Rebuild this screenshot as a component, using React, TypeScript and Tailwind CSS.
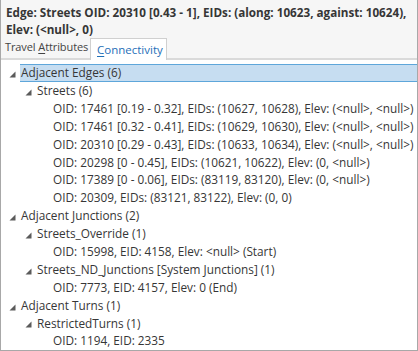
import React from "react";

type Row = { level: number; text: string; toggle: boolean; selected?: boolean };

const rows: Row[] = [
  { level: 0, text: "Adjacent Edges (6)", toggle: true, selected: true },
  { level: 1, text: "Streets (6)", toggle: true },
  { level: 2, text: "OID: 17461 [0.19 - 0.32], EIDs: (10627, 10628), Elev: (<null>, <null>)", toggle: false },
  { level: 2, text: "OID: 17461 [0.32 - 0.41], EIDs: (10629, 10630), Elev: (<null>, <null>)", toggle: false },
  { level: 2, text: "OID: 20310 [0.29 - 0.43], EIDs: (10633, 10634), Elev: (<null>, <null>)", toggle: false },
  { level: 2, text: "OID: 20298 [0 - 0.45], EIDs: (10621, 10622), Elev: (0, <null>)", toggle: false },
  { level: 2, text: "OID: 17389 [0 - 0.06], EIDs: (83119, 83120), Elev: (0, <null>)", toggle: false },
  { level: 2, text: "OID: 20309, EIDs: (83121, 83122), Elev: (0, 0)", toggle: false },
  { level: 0, text: "Adjacent Junctions (2)", toggle: true },
  { level: 1, text: "Streets_Override (1)", toggle: true },
  { level: 2, text: "OID: 15998, EID: 4158, Elev: <null> (Start)", toggle: false },
  { level: 1, text: "Streets_ND_Junctions [System Junctions] (1)", toggle: true },
  { level: 2, text: "OID: 7773, EID: 4157, Elev: 0 (End)", toggle: false },
  { level: 0, text: "Adjacent Turns (1)", toggle: true },
  { level: 1, text: "RestrictedTurns (1)", toggle: true },
  { level: 2, text: "OID: 1194, EID: 2335", toggle: false },
];

const indent: Record<number, string> = { 0: "pl-[6px]", 1: "pl-[22px]", 2: "pl-[38px]" };

function Tri() {
  return (
    <svg width="7" height="7" viewBox="0 0 7 7" className="mt-[3px]">
      <polygon points="6.5,0.5 6.5,6.5 0.5,6.5" fill="#5b5b5b" />
    </svg>
  );
}

export default function App() {
  return (
    <div
      className="w-[418px] h-[351px] bg-white border-l border-r border-b border-[#a8a8a8] flex flex-col overflow-hidden text-[#363636]"
      style={{ fontFamily: '"Open Sans", "Noto Sans", sans-serif' }}
    >
      <div className="bg-[#f6f6f6] px-[5px] pt-[4px] h-[40px] text-[11.7px] leading-[17px] font-bold text-[#363636]">
        <div className="whitespace-nowrap">Edge: Streets OID: 20310 [0.43 - 1], EIDs: (along: 10623, against: 10624),</div>
        <div className="whitespace-nowrap">Elev: (&lt;null&gt;, 0)</div>
      </div>
      <div className="flex items-end h-[22px] bg-[#f6f6f6] border-b-2 border-[#dadada] text-[11px]">
        <div className="h-[21px] pl-[4px] flex items-center text-[#444] w-[89px] whitespace-nowrap tracking-[-0.1px]">
          Travel&nbsp;<span className="underline underline-offset-2">A</span>ttributes
        </div>
        <div className="h-[22px] -mb-[2px] pl-[6px] flex items-center bg-white border border-b-0 border-[#d0d0d0] text-[#1f6fb8] w-[77px] whitespace-nowrap text-[11.5px]">
          <span className="underline underline-offset-2">C</span>onnectivity
        </div>
        <div className="flex-1" />
      </div>
      <div className="pt-[4px] text-[11.8px] flex flex-col">
        {rows.map((r, i) => (
          <div key={i} className={`flex items-center h-[17.9px] ${indent[r.level]}`}>
            <div className="w-[14px] shrink-0 flex items-center pl-[2px]">{r.toggle ? <Tri /> : null}</div>
            <div
              className={`flex-1 h-full flex items-center whitespace-nowrap ${
                r.selected ? "bg-[#c6ddf1] border-y border-[#5ea6da] -ml-[1px] pl-[1px]" : ""
              }`}
            >
              {r.text}
            </div>
          </div>
        ))}
      </div>
    </div>
  );
}
